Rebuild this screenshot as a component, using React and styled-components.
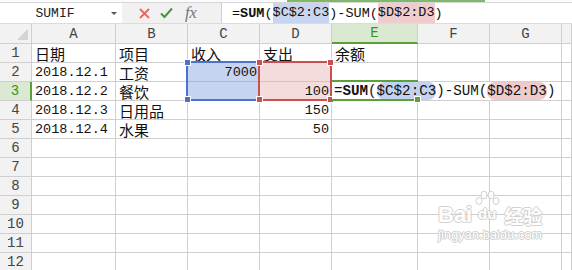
import React from "react";
import styled, { createGlobalStyle } from "styled-components";

const MONO = '"Liberation Mono", "DejaVu Sans Mono", monospace';
const CJK = '"Noto Sans CJK SC", "Noto Sans", sans-serif';

const Global = createGlobalStyle`
  html, body { margin: 0; padding: 0; background: #fff; }
  body { width: 572px; height: 270px; overflow: hidden; font-family: ${MONO}; }
`;

const Page = styled.div`
  position: relative;
  width: 572px;
  height: 270px;
  overflow: hidden;
  display: flex;
  flex-direction: column;
`;

const TopStrip = styled.div`
  height: 4px;
  background: #fbfbfb;
  border-bottom: 1px solid #d6d6d6;
  display: flex;
`;

const TabMark = styled.div`
  margin-left: 287px;
  width: 198px;
  height: 2px;
  background: #7fb868;
`;

const Toolbar = styled.div`
  height: 22px;
  background: #f1f1f1;
  display: flex;
  align-items: stretch;
  border-bottom: 1px solid #dcdcdc;
`;

const NameBox = styled.div`
  width: 122px;
  background: #fff;
  position: relative;
  display: flex;
  align-items: center;
  justify-content: center;
  padding-right: 12px;
  box-sizing: border-box;
  font: 13px ${MONO};
  color: #222;
`;

const Caret = styled.span`
  position: absolute;
  right: 5px;
  top: 9px;
  width: 0;
  height: 0;
  border-left: 3px solid transparent;
  border-right: 3px solid transparent;
  border-top: 3px solid #555;
`;

const Tools = styled.div`
  width: 99px;
  display: flex;
  align-items: center;
  gap: 10px;
  padding-left: 17px;
  box-sizing: border-box;
`;

const Fx = styled.span`
  font: italic 17px "Liberation Serif", serif;
  color: #777;
  margin-left: 2px;
  letter-spacing: -0.5px;
`;

const FormulaBar = styled.div`
  flex: 1;
  background: #fff;
  border-left: 1px solid #cfcfcf;
  display: flex;
  align-items: center;
  padding-left: 10px;
  font: 13.5px ${MONO};
  color: #111;
  white-space: pre;
`;

const Strong = styled.b`
  font-weight: 700;
`;

const BarRef = styled.span`
  background: ${p => p.$color};
  line-height: 20px;
`;

const Sheet = styled.div`
  display: grid;
  grid-template-columns: 32px 84px 72px 72px 72px 86px 72px 72px 1fr;
  grid-template-rows: 20px;
  grid-auto-rows: 19px;
`;

const Corner = styled.div`
  grid-row: 1;
  grid-column: 1;
  background: #f2f2f2;
  border-right: 1px solid #cfcfcf;
  border-bottom: 1px solid #cfcfcf;
  position: relative;
`;

const CornerTri = styled.span`
  position: absolute;
  right: 3px;
  bottom: 3px;
  width: 0;
  height: 0;
  border-left: 11px solid transparent;
  border-bottom: 11px solid #d3d3d3;
`;

const ColHead = styled.div`
  grid-row: 1;
  grid-column: ${p => p.$c};
  background: ${p => (p.$active ? "#dbe9d2" : "#f2f2f2")};
  color: ${p => (p.$active ? "#3f8f1e" : "#444")};
  border-right: 1px solid #cfcfcf;
  border-bottom: ${p => (p.$active ? "2px solid #5aa13a" : "1px solid #cfcfcf")};
  display: flex;
  align-items: center;
  justify-content: center;
  font: 14px ${MONO};
`;

const RowHead = styled.div`
  grid-row: ${p => p.$r};
  grid-column: 1;
  background: ${p => (p.$active ? "#dbe9d2" : "#f2f2f2")};
  color: ${p => (p.$active ? "#3f8f1e" : "#444")};
  border-right: ${p => (p.$active ? "2px solid #5aa13a" : "1px solid #cfcfcf")};
  border-bottom: 1px solid #cfcfcf;
  display: flex;
  align-items: center;
  justify-content: center;
  font: 14px ${MONO};
`;

const Cell = styled.div`
  grid-row: ${p => p.$r};
  grid-column: ${p => p.$c};
  position: relative;
  z-index: ${p => (p.$top ? 3 : 0)};
  background: ${p => p.$fill || "#fff"};
  border-right: 1px solid ${p => (p.$noRight ? "#fff" : "#cfcfcf")};
  border-bottom: 1px solid ${p => p.$line || "#cfcfcf"};
  display: flex;
  align-items: flex-end;
  justify-content: ${p => (p.$right ? "flex-end" : "flex-start")};
  padding: 0 2px 0 3px;
  white-space: nowrap;
  color: #111;
  font: ${p => (p.$cjk ? `15px/17px ${CJK}` : `13.5px/17px ${MONO}`)};
`;

const CellFormula = styled.span`
  font: 14.2px/17px ${MONO};
  color: #111;
  margin-left: -1px;
  white-space: pre;
`;

const CellRef = styled.span`
  background: ${p => p.$color};
  border-radius: 8px;
  padding: 1px 0;
`;

const Range = styled.div`
  grid-column: ${p => p.$col};
  grid-row: ${p => p.$row} / span 2;
  margin: -2px 0 0 -2px;
  border: 2px solid ${p => p.$color};
  position: relative;
  z-index: 2;
  pointer-events: none;
`;

const Handle = styled.span`
  position: absolute;
  width: 5px;
  height: 5px;
  background: ${p => p.$color};
  border: 1px solid #fff;
  ${p => (p.$t ? "top: -4px;" : "bottom: -4px;")}
  ${p => (p.$l ? "left: -4px;" : "right: -4px;")}
`;

const Active = styled.div`
  grid-column: 6;
  grid-row: 4;
  margin-top: -2px;
  border-top: 2px solid #5aa13a;
  border-bottom: 2px solid #5aa13a;
  position: relative;
  z-index: 4;
  pointer-events: none;
`;

const FillHandle = styled.span`
  position: absolute;
  right: -3px;
  bottom: -4px;
  width: 5px;
  height: 5px;
  background: #5aa13a;
  border: 1px solid #fff;
`;

const Watermark = styled.div`
  position: absolute;
  left: 438px;
  top: 204px;
  display: flex;
  flex-direction: column;
  align-items: center;
  color: #fff;
  opacity: 0.85;
  text-shadow: 1px 0 #c9c9c9, -1px 0 #c9c9c9, 0 1px #c9c9c9, 0 -1px #c9c9c9;
  pointer-events: none;
  z-index: 5;
`;

const MarkRow = styled.div`
  display: flex;
  align-items: flex-end;
  font: 700 22px/22px "Liberation Sans", Arial, sans-serif;
`;

const MarkCjk = styled.span`
  font: 700 19px/21px ${CJK};
  margin-left: 2px;
`;

const MarkUrl = styled.div`
  margin-top: 3px;
  font: 12.5px/12px "Liberation Sans", Arial, sans-serif;
  letter-spacing: 0.2px;
`;

const Paw = styled.div`
  width: 28px;
  height: 36px;
  margin: -14px 1px 0;
  display: flex;
  flex-direction: column;
  align-items: center;
`;

const PawText = styled.span`
  font: 700 15px/15px "Liberation Sans", Arial, sans-serif;
  margin-top: -2px;
`;

const cols = ["A", "B", "C", "D", "E", "F", "G", ""];

const BLUE = "#c6d4f0";
const PINK = "#f5dcdc";

const rows = [
  [{ t: "日期", cjk: true }, { t: "项目", cjk: true }, { t: "收入", cjk: true }, { t: "支出", cjk: true }, { t: "余额", cjk: true }],
  [{ t: "2018.12.1" }, { t: "工资", cjk: true }, { t: "7000", right: true, fill: BLUE, line: "#aeb8cc" }, { fill: PINK, line: "#d9c0c0" }],
  [{ t: "2018.12.2" }, { t: "餐饮", cjk: true }, { fill: BLUE }, { t: "100", right: true, fill: PINK }, { formula: true }, { noRight: true }],
  [{ t: "2018.12.3" }, { t: "日用品", cjk: true }, {}, { t: "150", right: true }],
  [{ t: "2018.12.4" }, { t: "水果", cjk: true }, {}, { t: "50", right: true }],
  [], [], [], [], [], [], [],
];

function Formula() {
  return (
    <CellFormula>
      =<Strong>SUM</Strong>(<CellRef $color="#c3d2f0">$C$2:C3</CellRef>)-SUM(<CellRef $color="#f0caca">$D$2:D3</CellRef>)
    </CellFormula>
  );
}

function PawIcon() {
  return (
    <Paw>
      <svg width="26" height="18" viewBox="0 0 26 18">
        <g fill="#fff" stroke="#c9c9c9" strokeWidth="1">
          <ellipse cx="5" cy="11" rx="3" ry="3.5" />
          <ellipse cx="10" cy="5" rx="3" ry="3.8" />
          <ellipse cx="17" cy="5" rx="3" ry="3.8" />
          <ellipse cx="22" cy="11" rx="3" ry="3.5" />
        </g>
      </svg>
      <PawText>du</PawText>
    </Paw>
  );
}

export default function App() {
  return (
    <Page>
      <Global />
      <TopStrip>
        <TabMark />
      </TopStrip>
      <Toolbar>
        <NameBox>
          SUMIF
          <Caret />
        </NameBox>
        <Tools>
          <svg width="11" height="11" viewBox="0 0 11 11">
            <path d="M1 1L10 10M10 1L1 10" stroke="#e06a66" strokeWidth="1.8" />
          </svg>
          <svg width="13" height="12" viewBox="0 0 13 12">
            <path d="M1 6.5L4.5 10L12 1.5" stroke="#3f9a3a" strokeWidth="2" fill="none" />
          </svg>
          <Fx>fx</Fx>
        </Tools>
        <FormulaBar>
          =<Strong>SUM</Strong>(<BarRef $color="#c7d5f1">$C$2:C3</BarRef>)-SUM(<BarRef $color="#f1cccc">$D$2:D3</BarRef>)
        </FormulaBar>
      </Toolbar>
      <Sheet>
        <Corner>
          <CornerTri />
        </Corner>
        {cols.map((c, i) => (
          <ColHead key={i} $c={i + 2} $active={c === "E"}>
            {c}
          </ColHead>
        ))}
        {rows.map((r, ri) => (
          <React.Fragment key={ri}>
            <RowHead $r={ri + 2} $active={ri === 2}>{ri + 1}</RowHead>
            {cols.map((_, ci) => {
              const d = r[ci] || {};
              return (
                <Cell
                  key={ci}
                  $r={ri + 2}
                  $c={ci + 2}
                  $cjk={d.cjk}
                  $right={d.right}
                  $fill={d.fill}
                  $line={d.line}
                  $noRight={d.noRight || d.formula}
                  $top={d.formula}
                >
                  {d.formula ? <Formula /> : d.t}
                </Cell>
              );
            })}
          </React.Fragment>
        ))}
        <Range $col={4} $row={3} $color="#4a74cc">
          <Handle $t $l $color="#4a74cc" />
          <Handle $l $color="#4a74cc" />
        </Range>
        <Range $col={5} $row={3} $color="#c9504f">
          <Handle $t $l $color="#c9504f" />
          <Handle $l $color="#c9504f" />
          <Handle $t $color="#c9504f" />
          <Handle $color="#c9504f" />
        </Range>
        <Active>
          <FillHandle />
        </Active>
      </Sheet>
      <Watermark>
        <MarkRow>
          Bai
          <PawIcon />
          <MarkCjk>经验</MarkCjk>
        </MarkRow>
        <MarkUrl>jingyan.baidu.com</MarkUrl>
      </Watermark>
    </Page>
  );
}
